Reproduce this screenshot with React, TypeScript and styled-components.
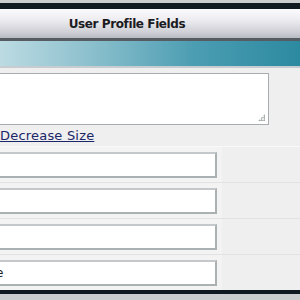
import React from "react";
import styled, { createGlobalStyle } from "styled-components";

const Global = createGlobalStyle`
  html, body {
    margin: 0;
    padding: 0;
    background: #c9cdcd;
    overflow: hidden;
  }
`;

const Page = styled.div`
  width: 300px;
  height: 300px;
  background: #c9cdcd;
  padding-top: 3px;
  box-sizing: border-box;
`;

const Frame = styled.div`
  border-top: 6px solid #0e1a20;
  border-bottom: 4px solid #0e1a20;
  background: #efefef;
`;

const Title = styled.div`
  height: 29px;
  background: linear-gradient(#fbfbfc 0%, #eeeef2 35%, #cfd0d6 80%, #b9bbc3 100%);
  border-bottom: 3px solid #575c62;
  display: flex;
  align-items: center;
  justify-content: center;
  padding-right: 46px;
  font-family: "DejaVu Sans", Tahoma, sans-serif;
  font-weight: bold;
  font-size: 12px;
  letter-spacing: -0.4px;
  color: #1b1b22;
`;

const Band = styled.div`
  height: 25px;
  background: linear-gradient(90deg, #bcdbe2 0%, #8cc0cd 30%, #4b9db2 65%, #2c8aa0 100%);
  border-bottom: 2px solid #c6ccd0;
`;

const Block = styled.div`
  padding: 5px 0 0 0;
  height: 78px;
  box-sizing: border-box;
  background: #efefef;
`;

const Area = styled.div`
  position: relative;
  width: 269px;
  height: 52px;
  box-sizing: border-box;
  background: #fff;
  border: 1px solid #a5adb3;
  border-left: none;
`;

const Grip = styled.div`
  position: absolute;
  right: 3px;
  bottom: 3px;
  width: 7px;
  height: 7px;
  background: radial-gradient(circle, #9aa0a4 0.9px, transparent 1.1px) 0 0 / 2.5px 2.5px;
  clip-path: polygon(100% 0, 100% 100%, 0 100%);
`;

const Toggle = styled.a`
  display: block;
  margin-top: 2px;
  font-family: "DejaVu Sans", Verdana, sans-serif;
  font-size: 13px;
  letter-spacing: 0.2px;
  color: #1a2668;
  text-decoration: underline;
  line-height: 18px;
`;

const Row = styled.div<{ $alt?: boolean }>`
  display: grid;
  grid-template-columns: 222px 1fr;
  height: 36px;
  border-top: 1px solid ${(p) => (p.$alt ? "#e2e2e2" : "#f9f9f9")};
  box-sizing: border-box;
`;

const Cell = styled.div`
  display: flex;
  align-items: center;
  background: #f3f3f3;
`;

const Side = styled.div`
  background: #efefef;
`;

const Field = styled.input`
  width: 217px;
  height: 26px;
  box-sizing: border-box;
  border: 2px solid #abb1b3;
  border-left: none;
  border-top-color: #c4c8ca;
  background: #fff;
  padding: 0;
  font-family: "DejaVu Sans", Verdana, sans-serif;
  font-size: 12px;
  color: #222;
  outline: none;
`;

const rows = ["", "", "", "e"];

export default function App() {
  return (
    <Page>
      <Global />
      <Frame>
        <Title>User Profile Fields</Title>
        <Band />
        <Block>
          <Area>
            <Grip />
          </Area>
          <Toggle href="#">Decrease Size</Toggle>
        </Block>
        {rows.map((v, i) => (
          <Row key={i} $alt={i > 0}>
            <Cell>
              <Field defaultValue={v} style={v ? { textIndent: -4 } : undefined} />
            </Cell>
            <Side />
          </Row>
        ))}
      </Frame>
    </Page>
  );
}
